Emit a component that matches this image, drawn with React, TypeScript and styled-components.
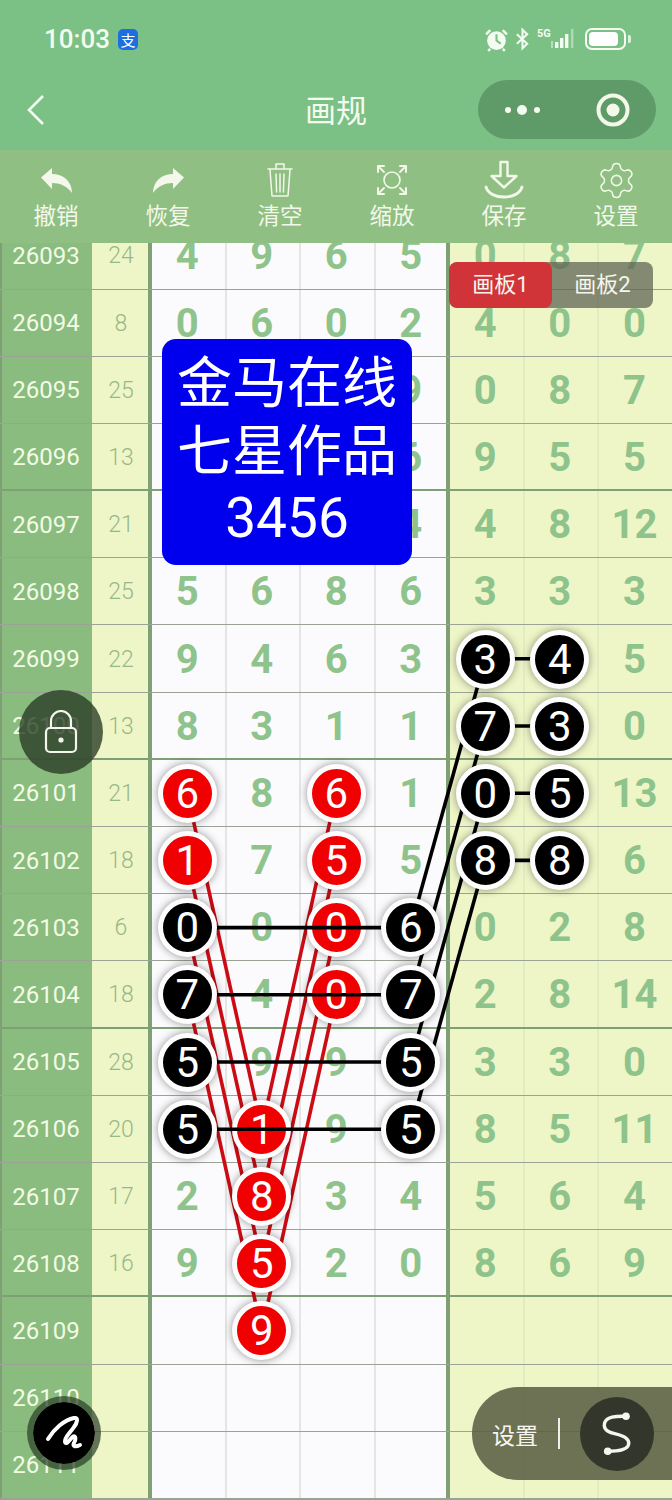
import { Fragment } from "react";
import styled, { createGlobalStyle } from "styled-components";
import { Settings } from "lucide-react";

const ROW_H = 67.2;
const COL_W = 74.5;
const FIRST_ISSUE = 26093;

const GlobalStyle = createGlobalStyle`
  html, body {
    margin: 0;
    padding: 0;
    background: #fff;
  }
  * {
    box-sizing: border-box;
  }
`;

const Page = styled.div`
  position: relative;
  width: 672px;
  height: 1500px;
  overflow: hidden;
  display: flex;
  flex-direction: column;
  font-family: Roboto, "Noto Sans CJK SC", sans-serif;
`;

const TopArea = styled.div`
  background: #7bc084;
  height: 150px;
  flex: none;
`;

const StatusBar = styled.div`
  height: 78px;
  padding: 0 46px 0 44px;
  display: flex;
  align-items: center;
  justify-content: space-between;
  color: #f4fbf0;
`;

const StatusLeft = styled.div`
  display: flex;
  align-items: center;
  gap: 8px;
`;

const Clock = styled.span`
  font-size: 26px;
  font-weight: 500;
`;

const PayBadge = styled.span`
  width: 20px;
  height: 21px;
  border-radius: 5px;
  background: #1b6fe0;
  color: #fff;
  font-size: 15px;
  line-height: 21px;
  text-align: center;
  font-family: "Noto Sans CJK SC", sans-serif;
`;

const StatusRight = styled.div`
  display: flex;
  align-items: center;
  gap: 6px;
`;

const SignalBox = styled.div`
  display: flex;
  align-items: flex-end;
  height: 22px;
  margin-left: 1px;
`;

const FiveG = styled.span`
  align-self: flex-start;
  font-size: 11px;
  font-weight: 700;
  line-height: 12px;
  width: 14px;
`;

const BatteryShell = styled.div`
  position: relative;
  width: 41px;
  height: 22px;
  margin-left: 4px;
  border: 2px solid #f4fbf0;
  border-radius: 7px;
  padding: 2px;
  &::after {
    content: "";
    position: absolute;
    right: -7px;
    top: 5px;
    width: 3px;
    height: 8px;
    border-radius: 0 2px 2px 0;
    background: #f4fbf0;
    opacity: 0.8;
  }
`;

const BatteryLevel = styled.div`
  width: 88%;
  height: 100%;
  border-radius: 4px;
  background: #fff;
`;

const NavBar = styled.div`
  height: 72px;
  padding: 2px 16px 0;
  display: grid;
  grid-template-columns: 1fr auto 1fr;
  align-items: start;
`;

const BackButton = styled.div`
  height: 59px;
  margin-left: 10px;
  display: flex;
  align-items: center;
`;

const NavTitle = styled.div`
  height: 58px;
  line-height: 58px;
  font-size: 31px;
  color: #f4fbf0;
  font-family: "Noto Sans CJK SC", sans-serif;
`;

const Capsule = styled.div`
  justify-self: end;
  width: 178px;
  height: 59px;
  border-radius: 30px;
  background: #5f9b69;
  display: flex;
  align-items: center;
  justify-content: space-between;
  padding: 0 26px;
`;

const Toolbar = styled.div`
  height: 93px;
  flex: none;
  background: #8fbf82;
  display: grid;
  grid-template-columns: repeat(6, 1fr);
  padding-top: 11px;
`;

const ToolItem = styled.div`
  display: flex;
  flex-direction: column;
  align-items: center;
  color: #f3f8ea;
`;

const ToolIcon = styled.div`
  height: 38px;
  display: flex;
  align-items: center;
  justify-content: center;
`;

const ToolLabel = styled.span`
  font-size: 22.5px;
  line-height: 30px;
  font-family: "Noto Sans CJK SC", sans-serif;
`;

const Board = styled.div`
  flex: 1;
  position: relative;
  overflow: hidden;
  background: #fbfbfd;
`;

const Sheet = styled.div`
  position: relative;
  margin-top: -20.7px;
`;

const Row = styled.div<{ $heavy: boolean }>`
  position: relative;
  height: ${ROW_H}px;
  display: grid;
  grid-template-columns: 92px 58px repeat(6, ${COL_W}px) 75px;
  &::after {
    content: "";
    position: absolute;
    left: 0;
    right: 0;
    bottom: ${(p) => (p.$heavy ? "-2px" : "-1px")};
    height: ${(p) => (p.$heavy ? "4px" : "2px")};
    background: ${(p) => (p.$heavy ? "#7f9f75" : "#9ba396")};
  }
`;

const IssueCell = styled.div`
  background: #8abb7f;
  box-shadow: inset 2px 0 0 #7f9f75;
  color: #f2fbe5;
  font-size: 24px;
  display: flex;
  align-items: center;
  justify-content: center;
`;

const SumCell = styled.div`
  background: #eef6c8;
  color: #98b888;
  font-size: 23px;
  font-weight: 300;
  display: flex;
  align-items: center;
  justify-content: center;
`;

const NumCell = styled.div<{ $zone: "white" | "yellow"; $edge: boolean }>`
  background: ${(p) => (p.$zone === "white" ? "#fbfbfd" : "#eef6c8")};
  box-shadow: ${(p) =>
    p.$edge
      ? "inset 2px 0 0 #7f9f75, -2px 0 0 #7f9f75"
      : p.$zone === "white"
        ? "inset 2px 0 0 #e4e5e4"
        : "inset 2px 0 0 #e3ecc0"};
  color: #8fc38c;
  font-size: 40px;
  font-weight: 700;
  display: flex;
  align-items: center;
  justify-content: center;
`;

const Ball = styled.div<{ $kind: "red" | "black" }>`
  position: relative;
  z-index: ${(p) => (p.$kind === "red" ? 2 : 4)};
  flex: none;
  width: 59px;
  height: 59px;
  border-radius: 50%;
  border: 5.5px solid #fdfdfd;
  background: ${(p) => (p.$kind === "red" ? "#f00000" : "#000")};
  box-shadow: 0 0 9px rgba(0, 0, 0, 0.42);
  color: #fff;
  font-size: 42px;
  font-weight: 400;
  display: flex;
  align-items: center;
  justify-content: center;
`;

const LineLayer = styled.svg<{ $z: number }>`
  position: absolute;
  left: 0;
  top: 0;
  z-index: ${(p) => p.$z};
  pointer-events: none;
`;

const Poster = styled.div`
  position: absolute;
  z-index: 5;
  left: 162px;
  top: 96px;
  width: 250px;
  height: 226px;
  border-radius: 14px;
  background: #0000ee;
  color: #fff;
  font-size: 55px;
  line-height: 67.5px;
  text-align: center;
  padding-top: 11px;
`;

const BoardTabs = styled.div`
  position: absolute;
  z-index: 6;
  left: 449px;
  top: 19px;
  width: 204px;
  height: 46px;
  border-radius: 8px;
  background: rgba(96, 100, 84, 0.75);
  display: flex;
  overflow: hidden;
`;

const BoardTab = styled.div<{ $active?: boolean }>`
  width: ${(p) => (p.$active ? "103px" : "101px")};
  border-radius: ${(p) => (p.$active ? "8px" : "0")};
  background: ${(p) => (p.$active ? "#d13438" : "transparent")};
  color: #f6f6f0;
  font-size: 22px;
  line-height: 46px;
  text-align: center;
`;

const LockButton = styled.div`
  position: absolute;
  z-index: 7;
  left: 19px;
  top: 690px;
  width: 84px;
  height: 84px;
  border-radius: 50%;
  background: rgba(40, 58, 36, 0.78);
  display: flex;
  align-items: center;
  justify-content: center;
`;

const BrushButton = styled.div`
  position: absolute;
  z-index: 7;
  left: 27px;
  top: 1396px;
  width: 74px;
  height: 74px;
  border-radius: 50%;
  background: #000;
  background-clip: padding-box;
  border: 6px solid rgba(45, 65, 40, 0.72);
  display: flex;
  align-items: center;
  justify-content: center;
`;

const SettingsPill = styled.div`
  position: absolute;
  z-index: 7;
  right: 0;
  top: 1387px;
  width: 200px;
  height: 93px;
  border-radius: 47px 0 0 47px;
  background: rgba(88, 92, 66, 0.86);
  display: flex;
  align-items: center;
  padding-left: 20px;
  color: #f6f6f0;
`;

const PillLabel = styled.span`
  font-size: 23px;
  width: 66px;
`;

const PillDivider = styled.span`
  width: 2px;
  height: 31px;
  background: #f0f0e8;
`;

const PillCircle = styled.div`
  width: 74px;
  height: 74px;
  margin-left: 20px;
  border-radius: 50%;
  background: #33362b;
  display: flex;
  align-items: center;
  justify-content: center;
`;

type Rec = { sum: string; nums: string[] };

const rows: Rec[] = [
  { sum: "24", nums: ["4", "9", "6", "5", "0", "8", "7"] },
  { sum: "8", nums: ["0", "6", "0", "2", "4", "0", "0"] },
  // first three digits of the next rows sit behind the poster
  { sum: "25", nums: ["", "", "", "9", "0", "8", "7"] },
  { sum: "13", nums: ["", "", "", "6", "9", "5", "5"] },
  { sum: "21", nums: ["", "", "", "4", "4", "8", "12"] },
  { sum: "25", nums: ["5", "6", "8", "6", "3", "3", "3"] },
  { sum: "22", nums: ["9", "4", "6", "3", "3", "4", "5"] },
  { sum: "13", nums: ["8", "3", "1", "1", "7", "3", "0"] },
  { sum: "21", nums: ["6", "8", "6", "1", "0", "5", "13"] },
  { sum: "18", nums: ["1", "7", "5", "5", "8", "8", "6"] },
  { sum: "6", nums: ["0", "0", "0", "6", "0", "2", "8"] },
  { sum: "18", nums: ["7", "4", "0", "7", "2", "8", "14"] },
  { sum: "28", nums: ["5", "9", "9", "5", "3", "3", "0"] },
  { sum: "20", nums: ["5", "1", "9", "5", "8", "5", "11"] },
  { sum: "17", nums: ["2", "8", "3", "4", "5", "6", "4"] },
  { sum: "16", nums: ["9", "5", "2", "0", "8", "6", "9"] },
  { sum: "", nums: ["", "9", "", "", "", "", ""] },
  { sum: "", nums: ["", "", "", "", "", "", ""] },
  { sum: "", nums: ["", "", "", "", "", "", ""] },
];

// row index, column index
const redBalls = [
  [8, 0], [9, 0], [8, 2], [9, 2], [10, 2], [11, 2],
  [13, 1], [14, 1], [15, 1], [16, 1],
];
const blackBalls = [
  [10, 0], [11, 0], [12, 0], [13, 0],
  [10, 3], [11, 3], [12, 3], [13, 3],
  [6, 4], [7, 4], [8, 4], [9, 4],
  [6, 5], [7, 5], [8, 5], [9, 5],
];

const ballKind = (r: number, c: number): "red" | "black" | null => {
  if (blackBalls.some(([a, b]) => a === r && b === c)) return "black";
  if (redBalls.some(([a, b]) => a === r && b === c)) return "red";
  return null;
};

const cx = (c: number) => 150 + COL_W * c + COL_W / 2;
const cy = (r: number) => ROW_H * r + ROW_H / 2;

// from [row, col] to [row, col]
const redLines = [0, 1, 2, 3].flatMap((i) => [
  [8 + i, 0, 13 + i, 1],
  [8 + i, 2, 13 + i, 1],
]);
const blackLines = [0, 1, 2, 3].flatMap((i) => [
  [10 + i, 0, 10 + i, 3],
  [10 + i, 3, 6 + i, 4],
  [6 + i, 4, 6 + i, 5],
]);

const tools = ["撤销", "恢复", "清空", "缩放", "保存", "设置"];

function ToolGlyph({ index }: { index: number }) {
  const line = { fill: "none", stroke: "#f3f8ea", strokeLinecap: "round", strokeLinejoin: "round" } as const;
  switch (index) {
    case 0:
      return (
        <svg width="31" height="25" viewBox="0 0 31 25" fill="#f3f8ea">
          <path d="M0 9.5L11 0v6c11 0 20 7 20 19-5-7-12-10-20-10v6z" />
        </svg>
      );
    case 1:
      return (
        <svg width="31" height="25" viewBox="0 0 31 25" fill="#f3f8ea">
          <path d="M31 9.5L20 0v6C9 6 0 13 0 25c5-7 12-10 20-10v6z" />
        </svg>
      );
    case 2:
      return (
        <svg width="28" height="36" viewBox="0 0 28 36" {...line} strokeWidth="1.5">
          <path d="M2 7h24M10 6V2h8v4" />
          <path d="M4 8l2 26h16l2-26" />
          <path d="M10 12l.6 18M14 12v18M18 12l-.6 18" />
        </svg>
      );
    case 3:
      return (
        <svg width="32" height="32" viewBox="0 0 32 32" {...line} strokeWidth="2">
          <circle cx="16" cy="16" r="8" strokeWidth="1.6" />
          <path d="M2 8V2h6M30 8V2h-6M2 24v6h6M30 24v6h-6" />
          <path d="M3 3l5 5M29 3l-5 5M3 29l5-5M29 29l-5-5" strokeWidth="1.8" />
        </svg>
      );
    case 4:
      return (
        <svg width="40" height="40" viewBox="0 0 40 40" {...line} strokeWidth="2.4">
          <path d="M16.5 2h7v14h9L20 27.5 7.500 16h9z" />
          <path d="M2 27c2 7 10 10 18 10s16-3 18-10" strokeWidth="2.8" />
        </svg>
      );
    default:
      return <Settings size={41} strokeWidth={0.9} color="#f3f8ea" />;
  }
}

export default function App() {
  return (
    <Page>
      <GlobalStyle />
      <TopArea>
        <StatusBar>
          <StatusLeft>
            <Clock>10:03</Clock>
            <PayBadge>支</PayBadge>
          </StatusLeft>
          <StatusRight>
            <svg width="25" height="25" viewBox="0 0 24 24">
              <circle cx="12" cy="13" r="9" fill="#f4fbf0" />
              <path d="M12 7v6l4 3" fill="none" stroke="#7bc084" strokeWidth="2" />
              <path d="M2 7l4-4M22 7l-4-4M6 21l-2 2M18 21l2 2" stroke="#f4fbf0" strokeWidth="2.4" />
            </svg>
            <svg width="15" height="24" viewBox="0 0 16 24" fill="none" stroke="#f4fbf0" strokeWidth="2.2">
              <path d="M2 7l11 10-5 5V2l5 5L2 17" />
            </svg>
            <SignalBox>
              <FiveG>5G</FiveG>
              <svg width="24" height="22" viewBox="0 0 24 22" fill="#f4fbf0">
                <rect x="0" y="13" width="2" height="7" opacity="0.5" />
                <rect x="4" y="14" width="3.4" height="6" />
                <rect x="9" y="10" width="3.4" height="10" />
                <rect x="14" y="6" width="3.4" height="14" />
                <rect x="20" y="1" width="2.4" height="19" opacity="0.45" />
              </svg>
            </SignalBox>
            <BatteryShell>
              <BatteryLevel />
            </BatteryShell>
          </StatusRight>
        </StatusBar>
        <NavBar>
          <BackButton>
            <svg width="20" height="34" viewBox="0 0 20 34" fill="none" stroke="#f4fbf0" strokeWidth="2.6">
              <path d="M17 3L3 17l14 14" />
            </svg>
          </BackButton>
          <NavTitle>画规</NavTitle>
          <Capsule>
            <svg width="38" height="14" viewBox="0 0 38 14" fill="#f4fbf0">
              <circle cx="4" cy="7" r="3" />
              <circle cx="18" cy="7" r="5" />
              <circle cx="33" cy="7" r="3" />
            </svg>
            <svg width="34" height="34" viewBox="0 0 34 34">
              <circle cx="17" cy="17" r="14.5" fill="none" stroke="#f4f8e8" strokeWidth="4" />
              <circle cx="17" cy="17" r="6.5" fill="#f4f8e8" />
            </svg>
          </Capsule>
        </NavBar>
      </TopArea>

      <Toolbar>
        {tools.map((t, i) => (
          <ToolItem key={t}>
            <ToolIcon>
              <ToolGlyph index={i} />
            </ToolIcon>
            <ToolLabel>{t}</ToolLabel>
          </ToolItem>
        ))}
      </Toolbar>

      <Board>
        <Sheet>
          <LineLayer $z={1} width="672" height="1280">
            {redLines.map(([r1, c1, r2, c2], i) => (
              <line key={i} x1={cx(c1)} y1={cy(r1)} x2={cx(c2)} y2={cy(r2)} stroke="#cc0c14" strokeWidth="3.6" />
            ))}
          </LineLayer>
          <LineLayer $z={3} width="672" height="1280">
            {blackLines.map(([r1, c1, r2, c2], i) => (
              <line key={i} x1={cx(c1)} y1={cy(r1)} x2={cx(c2)} y2={cy(r2)} stroke="#000" strokeWidth="3.6" />
            ))}
          </LineLayer>
          {rows.map((row, r) => (
            <Row key={r} $heavy={r % 4 === 3 && r < 16}>
              <IssueCell>{FIRST_ISSUE + r}</IssueCell>
              <SumCell>{row.sum}</SumCell>
              {row.nums.map((n, c) => {
                const kind = ballKind(r, c);
                return (
                  <NumCell key={c} $zone={c < 4 ? "white" : "yellow"} $edge={c === 0 || c === 4}>
                    {kind ? <Ball $kind={kind}>{n}</Ball> : <Fragment>{n}</Fragment>}
                  </NumCell>
                );
              })}
            </Row>
          ))}
        </Sheet>
        <Poster>
          金马在线
          <br />
          七星作品
          <br />
          3456
        </Poster>
        <BoardTabs>
          <BoardTab $active>画板1</BoardTab>
          <BoardTab>画板2</BoardTab>
        </BoardTabs>
      </Board>

      <LockButton>
        <svg width="34" height="44" viewBox="0 0 34 44" fill="none" stroke="#f4f6ee" strokeWidth="2.2">
          <path d="M7 18V11a10 10 0 0 1 20 0v7" />
          <rect x="2" y="18" width="30" height="24" rx="4" />
          <circle cx="17" cy="30" r="2.6" fill="#f4f6ee" stroke="none" />
        </svg>
      </LockButton>
      <BrushButton>
        <svg width="48" height="48" viewBox="0 0 48 48" fill="none" stroke="#fff" strokeWidth="4" strokeLinecap="round" strokeLinejoin="round">
          <path d="M8 30C14 20 24 11 34 9c5-1 3 5 0 9-4 6-10 11-9 15 1 4 6-4 8-5.500 3-1.500 3 3.500 1 6.500-2 4 2 4 6 2" />
        </svg>
      </BrushButton>
      <SettingsPill>
        <PillLabel>设置</PillLabel>
        <PillDivider />
        <PillCircle>
          <svg width="48" height="56" viewBox="0 0 48 56" fill="none" stroke="#f6f6f0" strokeWidth="3.4" strokeLinecap="round">
            <path d="M33 10.300C25 10 11 10 11.300 19.500 11.500 27 22 27 28 29.500 35 32 37 36 35 40 32 45 22 45 14.700 45.300" />
            <circle cx="33" cy="10.300" r="3.800" fill="#f6f6f0" stroke="none" />
            <circle cx="14.700" cy="45.300" r="3.800" fill="#f6f6f0" stroke="none" />
          </svg>
        </PillCircle>
      </SettingsPill>
    </Page>
  );
}
